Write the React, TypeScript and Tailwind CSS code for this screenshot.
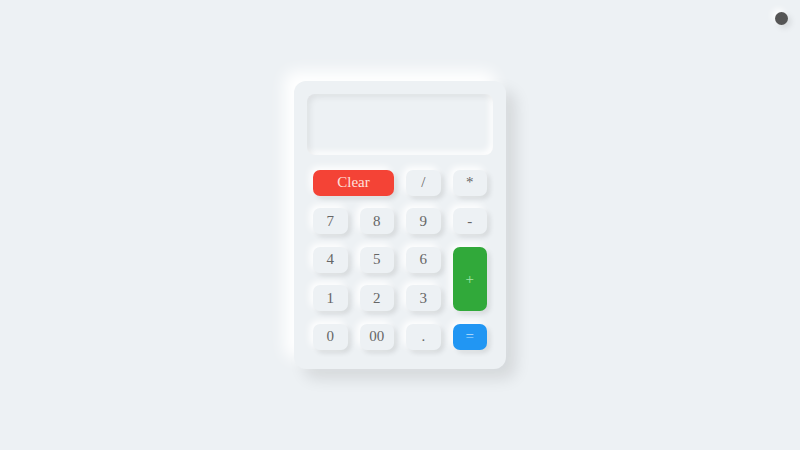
import React from 'react';

const keys = [
  { label: 'Clear', cls: 'col-span-2 bg-[#f44336] text-[#ffe0dc] shadow-[-3px_-3px_7px_#ffffff,3px_3px_5px_rgba(0,0,0,0.1)]' },
  { label: '/' },
  { label: '*' },
  { label: '7' },
  { label: '8' },
  { label: '9' },
  { label: '-' },
  { label: '4' },
  { label: '5' },
  { label: '6' },
  { label: '+', cls: 'row-span-2 bg-[#31a93a] text-[#a6e6a8] shadow-[-3px_-3px_7px_#ffffff,3px_3px_5px_rgba(0,0,0,0.1)]' },
  { label: '1' },
  { label: '2' },
  { label: '3' },
  { label: '0' },
  { label: '00' },
  { label: '.' },
  { label: '=', cls: 'bg-[#2196f3] text-[#bfe1fd] shadow-[-3px_-3px_7px_#ffffff,3px_3px_5px_rgba(0,0,0,0.1)]' },
];

export default function App() {
  return (
    <div className="relative flex h-screen w-full items-center justify-center bg-[#edf1f4] font-['Liberation_Serif',serif]">
      <div className="absolute right-[12px] top-[12px] h-[13px] w-[13px] rounded-full bg-[#555555] shadow-[-3px_-3px_6px_#ffffff,3px_3px_6px_rgba(0,0,0,0.1)]" />

      <div className="w-[212px] rounded-[12px] bg-[#edf1f4] px-[13px] pb-[19px] pt-[13px] shadow-[-10px_-10px_15px_#ffffff,10px_10px_15px_rgba(0,0,0,0.1)]">
        <div className="h-[61px] rounded-[8px] bg-[#edf1f4] shadow-[inset_3px_3px_6px_rgba(0,0,0,0.07),inset_-3px_-3px_6px_#ffffff]" />

        <div className="mt-[14.5px] grid grid-cols-4 grid-rows-[repeat(5,26px)] gap-x-[12px] gap-y-[12.6px] px-[6px]">
          {keys.map((k) => (
            <button
              key={k.label}
              className={`flex items-center justify-center rounded-[7px] text-[15px] leading-none ${
                k.cls ?? 'bg-[#edf1f4] text-[#666666] shadow-[-3px_-3px_7px_#ffffff,3px_3px_5px_rgba(0,0,0,0.1)]'
              }`}
            >
              {k.label}
            </button>
          ))}
        </div>
      </div>
    </div>
  );
}
